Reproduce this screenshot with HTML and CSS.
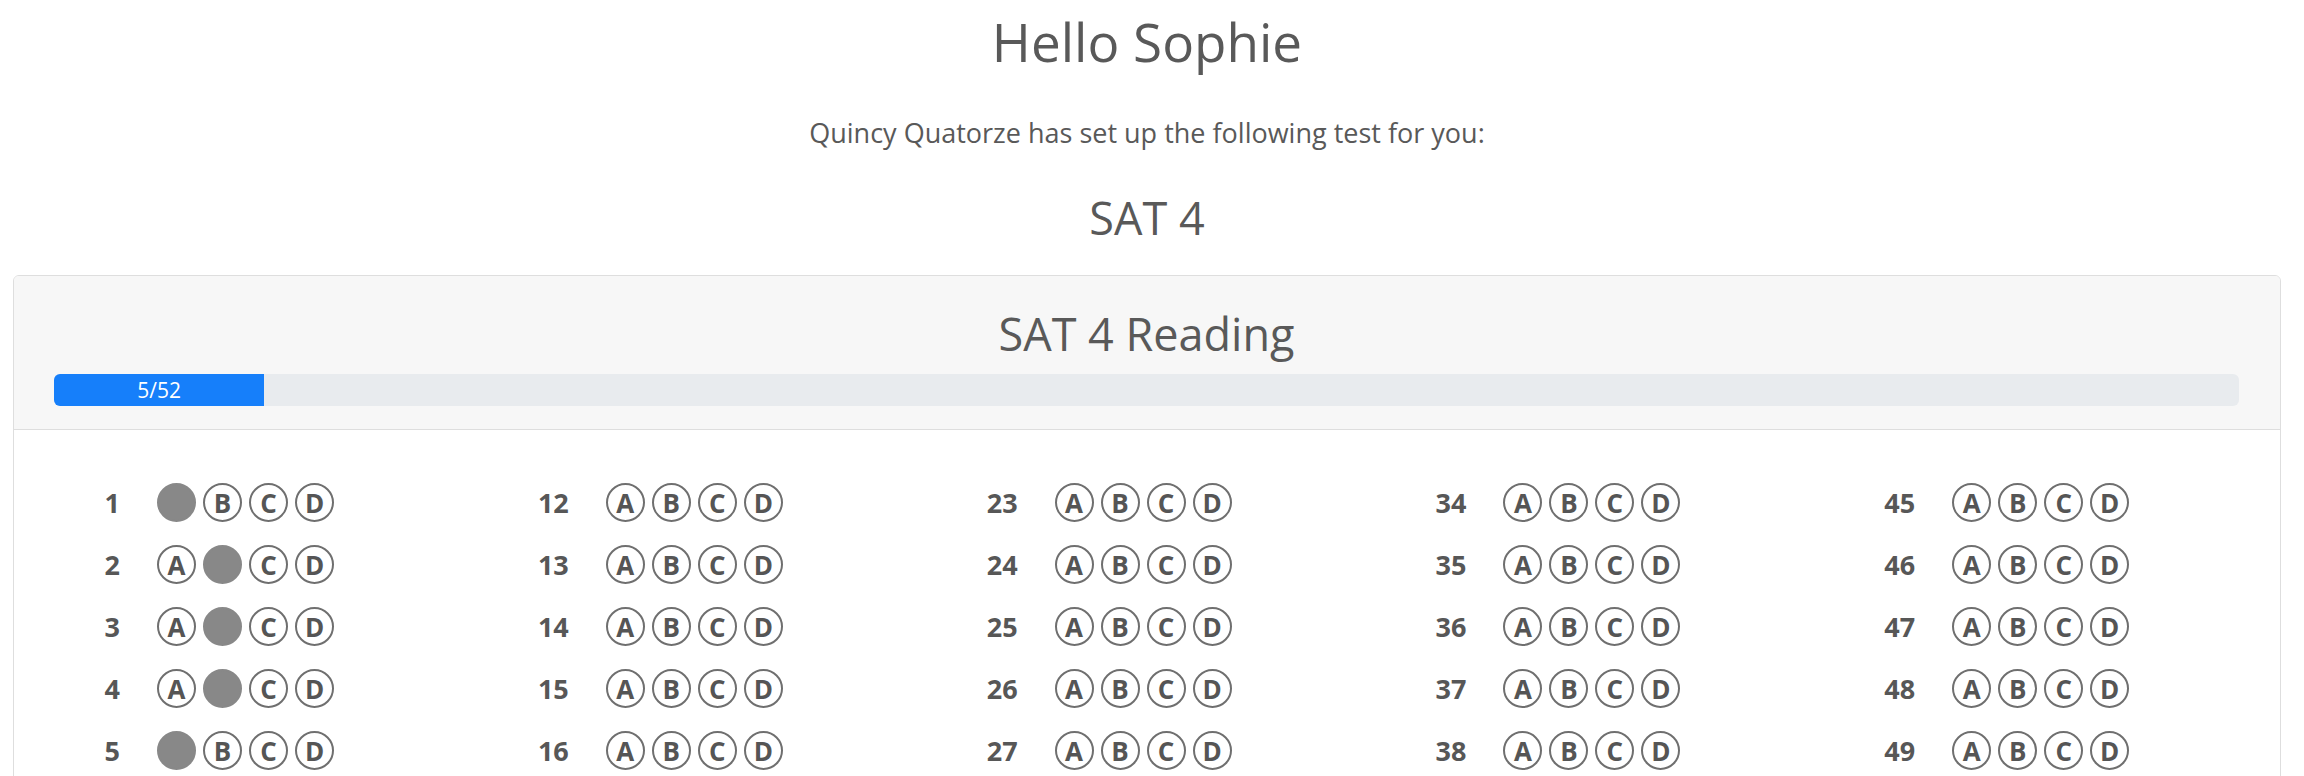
FILE: index.html
```html
<!DOCTYPE html>
<html lang="en">
<head>
<meta charset="utf-8">
<title>Test</title>
<link rel="stylesheet" href="styles.css">
</head>
<body>
<div class="page">
  <h1 class="greet">Hello Sophie</h1>
  <p class="intro">Quincy Quatorze has set up the following test for you:</p>
  <h2 class="test-name">SAT 4</h2>
  <section class="card">
    <header class="card-header">
      <h2 class="section-name">SAT 4 Reading</h2>
      <div class="progress"><div class="progress-fill" style="width: 9.615%">5/52</div></div>
    </header>
    <div class="card-body">
      <div class="sheet">
        <div class="q"><span class="num">1</span><span class="b on"></span><span class="b">B</span><span class="b">C</span><span class="b">D</span></div>
        <div class="q"><span class="num">2</span><span class="b">A</span><span class="b on"></span><span class="b">C</span><span class="b">D</span></div>
        <div class="q"><span class="num">3</span><span class="b">A</span><span class="b on"></span><span class="b">C</span><span class="b">D</span></div>
        <div class="q"><span class="num">4</span><span class="b">A</span><span class="b on"></span><span class="b">C</span><span class="b">D</span></div>
        <div class="q"><span class="num">5</span><span class="b on"></span><span class="b">B</span><span class="b">C</span><span class="b">D</span></div>
        <div class="q"><span class="num">6</span><span class="b">A</span><span class="b">B</span><span class="b">C</span><span class="b">D</span></div>
        <div class="q"><span class="num">7</span><span class="b">A</span><span class="b">B</span><span class="b">C</span><span class="b">D</span></div>
        <div class="q"><span class="num">8</span><span class="b">A</span><span class="b">B</span><span class="b">C</span><span class="b">D</span></div>
        <div class="q"><span class="num">9</span><span class="b">A</span><span class="b">B</span><span class="b">C</span><span class="b">D</span></div>
        <div class="q"><span class="num">10</span><span class="b">A</span><span class="b">B</span><span class="b">C</span><span class="b">D</span></div>
        <div class="q"><span class="num">11</span><span class="b">A</span><span class="b">B</span><span class="b">C</span><span class="b">D</span></div>
        <div class="q"><span class="num">12</span><span class="b">A</span><span class="b">B</span><span class="b">C</span><span class="b">D</span></div>
        <div class="q"><span class="num">13</span><span class="b">A</span><span class="b">B</span><span class="b">C</span><span class="b">D</span></div>
        <div class="q"><span class="num">14</span><span class="b">A</span><span class="b">B</span><span class="b">C</span><span class="b">D</span></div>
        <div class="q"><span class="num">15</span><span class="b">A</span><span class="b">B</span><span class="b">C</span><span class="b">D</span></div>
        <div class="q"><span class="num">16</span><span class="b">A</span><span class="b">B</span><span class="b">C</span><span class="b">D</span></div>
        <div class="q"><span class="num">17</span><span class="b">A</span><span class="b">B</span><span class="b">C</span><span class="b">D</span></div>
        <div class="q"><span class="num">18</span><span class="b">A</span><span class="b">B</span><span class="b">C</span><span class="b">D</span></div>
        <div class="q"><span class="num">19</span><span class="b">A</span><span class="b">B</span><span class="b">C</span><span class="b">D</span></div>
        <div class="q"><span class="num">20</span><span class="b">A</span><span class="b">B</span><span class="b">C</span><span class="b">D</span></div>
        <div class="q"><span class="num">21</span><span class="b">A</span><span class="b">B</span><span class="b">C</span><span class="b">D</span></div>
        <div class="q"><span class="num">22</span><span class="b">A</span><span class="b">B</span><span class="b">C</span><span class="b">D</span></div>
        <div class="q"><span class="num">23</span><span class="b">A</span><span class="b">B</span><span class="b">C</span><span class="b">D</span></div>
        <div class="q"><span class="num">24</span><span class="b">A</span><span class="b">B</span><span class="b">C</span><span class="b">D</span></div>
        <div class="q"><span class="num">25</span><span class="b">A</span><span class="b">B</span><span class="b">C</span><span class="b">D</span></div>
        <div class="q"><span class="num">26</span><span class="b">A</span><span class="b">B</span><span class="b">C</span><span class="b">D</span></div>
        <div class="q"><span class="num">27</span><span class="b">A</span><span class="b">B</span><span class="b">C</span><span class="b">D</span></div>
        <div class="q"><span class="num">28</span><span class="b">A</span><span class="b">B</span><span class="b">C</span><span class="b">D</span></div>
        <div class="q"><span class="num">29</span><span class="b">A</span><span class="b">B</span><span class="b">C</span><span class="b">D</span></div>
        <div class="q"><span class="num">30</span><span class="b">A</span><span class="b">B</span><span class="b">C</span><span class="b">D</span></div>
        <div class="q"><span class="num">31</span><span class="b">A</span><span class="b">B</span><span class="b">C</span><span class="b">D</span></div>
        <div class="q"><span class="num">32</span><span class="b">A</span><span class="b">B</span><span class="b">C</span><span class="b">D</span></div>
        <div class="q"><span class="num">33</span><span class="b">A</span><span class="b">B</span><span class="b">C</span><span class="b">D</span></div>
        <div class="q"><span class="num">34</span><span class="b">A</span><span class="b">B</span><span class="b">C</span><span class="b">D</span></div>
        <div class="q"><span class="num">35</span><span class="b">A</span><span class="b">B</span><span class="b">C</span><span class="b">D</span></div>
        <div class="q"><span class="num">36</span><span class="b">A</span><span class="b">B</span><span class="b">C</span><span class="b">D</span></div>
        <div class="q"><span class="num">37</span><span class="b">A</span><span class="b">B</span><span class="b">C</span><span class="b">D</span></div>
        <div class="q"><span class="num">38</span><span class="b">A</span><span class="b">B</span><span class="b">C</span><span class="b">D</span></div>
        <div class="q"><span class="num">39</span><span class="b">A</span><span class="b">B</span><span class="b">C</span><span class="b">D</span></div>
        <div class="q"><span class="num">40</span><span class="b">A</span><span class="b">B</span><span class="b">C</span><span class="b">D</span></div>
        <div class="q"><span class="num">41</span><span class="b">A</span><span class="b">B</span><span class="b">C</span><span class="b">D</span></div>
        <div class="q"><span class="num">42</span><span class="b">A</span><span class="b">B</span><span class="b">C</span><span class="b">D</span></div>
        <div class="q"><span class="num">43</span><span class="b">A</span><span class="b">B</span><span class="b">C</span><span class="b">D</span></div>
        <div class="q"><span class="num">44</span><span class="b">A</span><span class="b">B</span><span class="b">C</span><span class="b">D</span></div>
        <div class="q"><span class="num">45</span><span class="b">A</span><span class="b">B</span><span class="b">C</span><span class="b">D</span></div>
        <div class="q"><span class="num">46</span><span class="b">A</span><span class="b">B</span><span class="b">C</span><span class="b">D</span></div>
        <div class="q"><span class="num">47</span><span class="b">A</span><span class="b">B</span><span class="b">C</span><span class="b">D</span></div>
        <div class="q"><span class="num">48</span><span class="b">A</span><span class="b">B</span><span class="b">C</span><span class="b">D</span></div>
        <div class="q"><span class="num">49</span><span class="b">A</span><span class="b">B</span><span class="b">C</span><span class="b">D</span></div>
        <div class="q"><span class="num">50</span><span class="b">A</span><span class="b">B</span><span class="b">C</span><span class="b">D</span></div>
        <div class="q"><span class="num">51</span><span class="b">A</span><span class="b">B</span><span class="b">C</span><span class="b">D</span></div>
        <div class="q"><span class="num">52</span><span class="b">A</span><span class="b">B</span><span class="b">C</span><span class="b">D</span></div>
      </div>
    </div>
  </section>
</div>
</body>
</html>
```

FILE: styles.css
```css
html, body {
  margin: 0;
  padding: 0;
  background: #ffffff;
}

body {
  font-family: "Open Sans", "Noto Sans", "Liberation Sans", sans-serif;
  color: #595959;
}

.page {
  width: 2268px;
  margin: 0 13px;
  display: flex;
  flex-direction: column;
  align-items: stretch;
}

.greet {
  margin: 10px 0 0;
  font-size: 53px;
  line-height: 1.2;
  font-weight: 400;
  text-align: center;
}

.intro {
  margin: 41px 0 0;
  font-size: 27px;
  line-height: 36px;
  text-align: center;
}

.test-name {
  margin: 40px 0 0;
  font-size: 45px;
  line-height: 1.2;
  font-weight: 400;
  text-align: center;
}

.card {
  margin-top: 30px;
  border: 1px solid #dedede;
  border-radius: 6px;
  background: #ffffff;
  overflow: hidden;
}

.card-header {
  background: #f7f7f7;
  border-bottom: 1px solid #dedede;
  padding: 31px 41px 23px 40px;
  display: flex;
  flex-direction: column;
  gap: 13px;
}

.section-name {
  margin: 0;
  font-size: 45px;
  line-height: 1.2;
  font-weight: 400;
  text-align: center;
}

.progress {
  height: 32px;
  background: #e8ebee;
  border-radius: 6px;
  overflow: hidden;
  display: flex;
}

.progress-fill {
  background: #167ffa;
  color: #ffffff;
  font-size: 21px;
  line-height: 32px;
  text-align: center;
}

.card-body {
  padding: 42px 11px 20px;
}

.sheet {
  display: grid;
  grid-template-columns: repeat(5, 1fr);
  grid-template-rows: repeat(11, 62px);
  grid-auto-flow: column;
}

.q {
  display: flex;
  align-items: center;
}

.num {
  width: 95px;
  flex: none;
  text-align: right;
  font-size: 27px;
  font-weight: 700;
  color: #575757;
  margin-right: 37px;
}

.b {
  width: 39px;
  height: 39px;
  box-sizing: border-box;
  border: 2.5px solid #6f6f6f;
  border-radius: 50%;
  margin-right: 7px;
  display: flex;
  align-items: center;
  justify-content: center;
  font-size: 26px;
  font-weight: 700;
  line-height: 1;
  color: #555555;
}

.b.on {
  background: #888888;
  border-color: #888888;
}
```
